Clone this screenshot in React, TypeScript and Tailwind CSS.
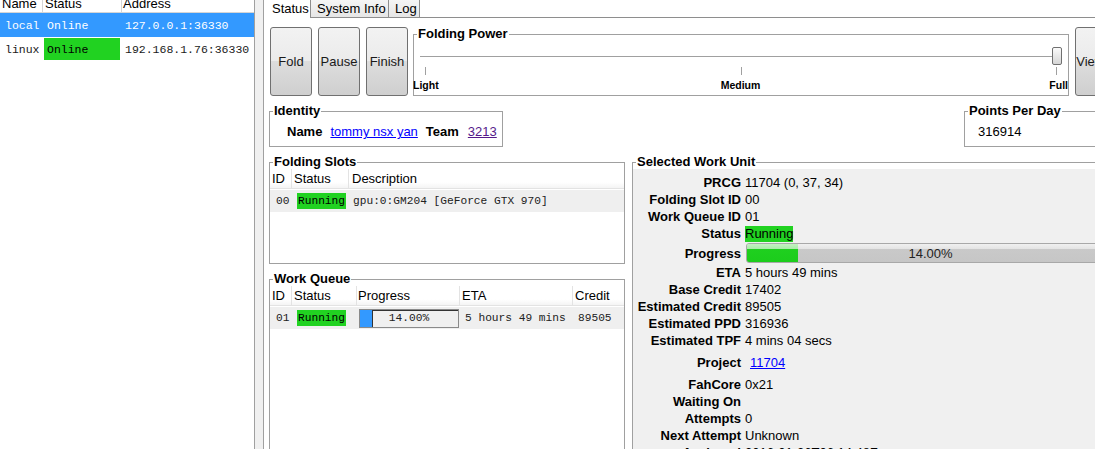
import React from 'react';

const clients = [
  { name: 'local', status: 'Online', address: '127.0.0.1:36330', selected: true },
  { name: 'linux', status: 'Online', address: '192.168.1.76:36330', selected: false },
];

function Group({ title, className = '', children }: { title: string; className?: string; children?: React.ReactNode }) {
  return (
    <fieldset className={`min-w-0 border border-[#a0a0a0] ${className}`}>
      <legend className="ml-[3px] px-[1px] text-[13px] font-bold leading-[14px] text-black">{title}</legend>
      {children}
    </fieldset>
  );
}

function WinButton({ label }: { label: string }) {
  return (
    <button className="h-[69px] w-[42px] shrink-0 overflow-hidden whitespace-nowrap rounded-[3px] border border-[#707070] bg-[linear-gradient(#f2f2f2_0%,#ebebeb_50%,#dddddd_50%,#cfcfcf_100%)] text-[13px] leading-[17px] text-[#1a1a1a]">
      {label}
    </button>
  );
}

function Running() {
  return <span className="block w-fit bg-[#21d221] px-[1px] leading-[16px] text-black">Running</span>;
}

function Row({ label, h = 'h-[17px]', children }: { label: string; h?: string; children?: React.ReactNode }) {
  return (
    <div className={`flex ${h} items-center leading-[17px]`}>
      <div className="w-[108px] shrink-0 whitespace-nowrap text-right font-bold">{label}</div>
      <div className="ml-[4px] flex min-w-0 flex-1 items-center whitespace-nowrap">{children}</div>
    </div>
  );
}

function ClientList() {
  return (
    <div className="h-full w-[255px] shrink-0 border-r border-[#a0a0a0] bg-white">
      {/* header row is scrolled partly out of view in the original */}
      <div className="grid h-[13px] grid-cols-[43px_79px_1fr] overflow-hidden border-b border-[#d5d5d5]">
        <div className="border-r border-[#d5d5d5] pl-[2px]">
          <div className="-mt-[5px] leading-[17px]">Name</div>
        </div>
        <div className="border-r border-[#d5d5d5] pl-[2px]">
          <div className="-mt-[5px] leading-[17px]">Status</div>
        </div>
        <div className="pl-[1px]">
          <div className="-mt-[5px] leading-[17px]">Address</div>
        </div>
      </div>
      {clients.map((c) => (
        <div
          key={c.name}
          className={`grid h-[24px] grid-cols-[43px_79px_1fr] items-center font-['Liberation_Mono',monospace] text-[11.5px] ${
            c.selected ? 'bg-[#3399ff] text-white' : 'text-[#1a1a1a]'
          }`}
        >
          <div className="pl-[5px] pt-[2px]">{c.name}</div>
          <div className="h-full py-[1px] pl-[1px] pr-[2px]">
            <div className={`flex h-full items-center pl-[3px] pt-[2px] ${c.selected ? '' : 'bg-[#21d221] text-black'}`}>{c.status}</div>
          </div>
          <div className="whitespace-nowrap pl-[3px] pt-[2px]">{c.address}</div>
        </div>
      ))}
    </div>
  );
}

function FoldingPower() {
  return (
    <Group title="Folding Power" className="ml-[5px] h-[69px] w-[656px] shrink-0">
      <div className="relative mx-[6px] mt-[6px] flex h-[18px] items-center">
        <div className="h-px w-full bg-[#a0a0a0]" />
        <div className="absolute right-0 top-0 h-[18px] w-[10px] rounded-[2px] border border-[#707070] bg-[linear-gradient(#fbfbfb_0%,#e8e8e8_50%,#d6d6d6_100%)]" />
      </div>
      <div className="mt-[2px] flex h-[8px] justify-between px-[11px]">
        <div className="w-px bg-[#a0a0a0]" />
        <div className="w-px bg-[#a0a0a0]" />
        <div className="w-px bg-[#a0a0a0]" />
      </div>
      <div className="-ml-[1px] mt-[4px] grid grid-cols-3 text-[10.5px] font-bold leading-[12px]">
        <div className="text-left">Light</div>
        <div className="text-center">Medium</div>
        <div className="text-right">Full</div>
      </div>
    </Group>
  );
}

function FoldingSlots() {
  return (
    <Group title="Folding Slots" className="h-[109px]">
      <div className="grid h-[20px] grid-cols-[22px_57px_1fr] border-b border-[#e3e3e3] bg-[linear-gradient(#ffffff_0%,#ffffff_70%,#f4f4f4_100%)] leading-[19px]">
        <div className="border-r border-[#e3e3e3] pl-[2px]">ID</div>
        <div className="border-r border-[#e3e3e3] pl-[2px]">Status</div>
        <div className="pl-[3px]">Description</div>
      </div>
      <div className="mt-[1px] grid h-[22px] grid-cols-[22px_57px_1fr] items-center bg-[#efefef] font-['Liberation_Mono',monospace] text-[11.2px] text-[#222]">
        <div className="pl-[6px]">00</div>
        <div className="pl-[5px]">
          <Running />
        </div>
        <div className="whitespace-nowrap pl-[4px]">gpu:0:GM204 [GeForce GTX 970]</div>
      </div>
    </Group>
  );
}

function WorkQueue() {
  return (
    <Group title="Work Queue" className="h-[200px]">
      <div className="grid h-[20px] grid-cols-[22px_65px_103px_113px_1fr] border-b border-[#e3e3e3] bg-[linear-gradient(#ffffff_0%,#ffffff_70%,#f4f4f4_100%)] leading-[19px]">
        <div className="border-r border-[#e3e3e3] pl-[2px]">ID</div>
        <div className="border-r border-[#e3e3e3] pl-[2px]">Status</div>
        <div className="border-r border-[#e3e3e3] pl-[1px]">Progress</div>
        <div className="border-r border-[#e3e3e3] pl-[2px]">ETA</div>
        <div className="pl-[2px]">Credit</div>
      </div>
      <div className="mt-[1px] grid h-[22px] grid-cols-[22px_65px_103px_113px_1fr] items-center bg-[#efefef] font-['Liberation_Mono',monospace] text-[11.2px] text-[#222]">
        <div className="pl-[6px]">01</div>
        <div className="pl-[5px]">
          <Running />
        </div>
        <div className="pl-[2px]">
          <div className="relative flex h-[19px] w-[100px] border border-[#8a8a8a]">
            <div className="w-[12px] bg-[#3399ff]" />
            <div className="flex-1 border-l border-t border-[#333333] bg-[#f0f0f0]" />
            <div className="absolute inset-0 flex items-center justify-center">14.00%</div>
          </div>
        </div>
        <div className="whitespace-nowrap pl-[5px]">5 hours 49 mins</div>
        <div className="pl-[5px]">89505</div>
      </div>
    </Group>
  );
}

function SelectedWorkUnit() {
  return (
    <Group title="Selected Work Unit" className="w-[486px] shrink-0">
      <div className="h-[300px] bg-[#f0f0f0] pt-[5px]">
        <Row label="PRCG">11704 (0, 37, 34)</Row>
        <Row label="Folding Slot ID">00</Row>
        <Row label="Work Queue ID">01</Row>
        <Row label="Status">
          <span className="block h-[16px] bg-[#21d221] leading-[16px]">Running</span>
        </Row>
        <Row label="Progress" h="h-[22px]">
          <div className="relative ml-[1px] mr-[2px] h-[20px] flex-1 overflow-hidden rounded-[3px] border border-[#a8a8a8] bg-[linear-gradient(#f0f0f0_0%,#e2e2e2_30%,#c9c9c9_30%,#c6c6c6_100%)]">
            <div className="h-full w-[14%] bg-[linear-gradient(#c2f2c2_0%,#a8eaa8_30%,#1fd01f_30%,#1ccc1c_100%)]" />
            <div className="absolute inset-0 flex items-center justify-center text-[#222]">14.00%</div>
          </div>
        </Row>
        <Row label="ETA">5 hours 49 mins</Row>
        <Row label="Base Credit">17402</Row>
        <Row label="Estimated Credit">89505</Row>
        <Row label="Estimated PPD">316936</Row>
        <Row label="Estimated TPF">4 mins 04 secs</Row>
        <Row label="Project" h="h-[27px]">
          <span className="pl-[5px] text-[#0000ff] underline">11704</span>
        </Row>
        <Row label="FahCore">0x21</Row>
        <Row label="Waiting On" />
        <Row label="Attempts">0</Row>
        <Row label="Next Attempt">Unknown</Row>
        <Row label="Assigned">2016-01-26T06:14:48Z</Row>
      </div>
    </Group>
  );
}

function MainPanel() {
  return (
    <div className="flex h-full flex-1 flex-col bg-white">
      <div className="flex h-[18px] shrink-0 leading-[17px]">
        <div className="w-[46px] bg-white pl-[8px]">Status</div>
        <div className="w-[78px] border-b border-l border-[#8e8e8e] bg-[linear-gradient(#f5f5f5,#e6e6e6)] pl-[6px]">System Info</div>
        <div className="w-[32px] border-x border-b border-[#8e8e8e] bg-[linear-gradient(#f5f5f5,#e6e6e6)] pl-[6px]">Log</div>
        <div className="flex-1 border-b border-[#8e8e8e]" />
      </div>
      <div className="w-[854px] pl-[5px] pt-[9px]">
        <div className="flex">
          <div className="ml-[1px] flex gap-[6px]">
            <WinButton label="Fold" />
            <WinButton label="Pause" />
            <WinButton label="Finish" />
          </div>
          <FoldingPower />
          <div className="ml-[6px]">
            <WinButton label="Viewer" />
          </div>
        </div>

        <div className="mt-[8px] flex justify-between">
          <Group title="Identity" className="h-[43px] w-[234px]">
            <div className="flex gap-[8px] pl-[17px] pt-[5px] leading-[17px]">
              <span className="font-bold">Name</span>
              <a className="text-[#0000ff] underline">tommy nsx yan</a>
              <span className="font-bold">Team</span>
              <a className="ml-[1px] text-[#551a8b] underline">3213</a>
            </div>
          </Group>
          <Group title="Points Per Day" className="h-[43px] w-[154px]">
            <div className="pl-[13px] pt-[5px] leading-[17px]">316914</div>
          </Group>
        </div>

        <div className="mt-[8px] flex gap-[7px]">
          <div className="flex w-[356px] shrink-0 flex-col gap-[8px]">
            <FoldingSlots />
            <WorkQueue />
          </div>
          <SelectedWorkUnit />
        </div>
      </div>
    </div>
  );
}

export default function App() {
  return (
    <div className="h-[449px] w-[1095px] overflow-hidden bg-white font-['Liberation_Sans',Arial,sans-serif] text-[13px] text-black">
      <div className="flex h-full w-[1140px]">
        <ClientList />
        <div className="w-[9px] shrink-0 border-r border-[#a0a0a0] bg-[#f0f0f0]" />
        <MainPanel />
      </div>
    </div>
  );
}
